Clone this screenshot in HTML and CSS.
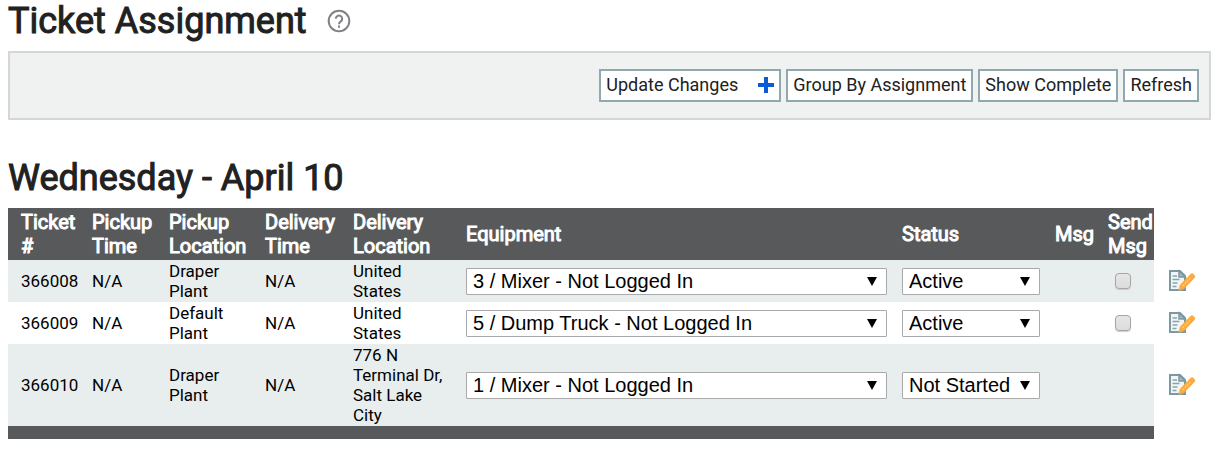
FILE: index.html
```html
<!DOCTYPE html>
<html lang="en">
<head>
<meta charset="utf-8">
<title>Ticket Assignment</title>
<link rel="stylesheet" href="styles.css">
</head>
<body>
<svg class="defs" width="0" height="0" aria-hidden="true">
    <symbol id="edit" viewBox="0 0 28 24">
        <path d="M2 2h10l5 5v14H2z" fill="#f1f5f6" stroke="#7c98a0" stroke-width="2"/>
        <path d="M11 2v6h6z" fill="#a9bcc1" stroke="#7c98a0" stroke-width="1.5"/>
        <path d="M4.500 7h4.500M4.500 10.500h7M4.500 14h5M4.500 17.500h4" stroke="#8ba4ab" stroke-width="1.600"/>
        <path d="M10.500 21.800l1.300-5.800L22.800 4.800q1.200-1.200 2.400 0l1.600 1.600q1 1.200 0 2.300L16 19.900z" fill="#fdab3d"/>
        <path d="M14.500 17l8-8" stroke="#ffd08c" stroke-width="1.200" stroke-dasharray="2 1"/>
    </symbol>
</svg>

<div class="title">
    <h1>Ticket Assignment</h1>
    <a class="help" href="#" aria-label="Help">
        <svg width="24" height="24" viewBox="0 0 24 24" fill="none" stroke="#808285" stroke-width="2">
            <circle cx="12" cy="12" r="10.300"/>
            <path d="M8.800 9.800a3.200 3.200 0 1 1 5 2.600c-1.200.9-1.800 1.400-1.800 2.800"/>
            <path d="M12 16.600v2.200"/>
        </svg>
    </a>
</div>

<div class="toolbar">
    <button type="button" class="update">Update Changes
        <svg width="16" height="16" viewBox="0 0 16 16"><path d="M8 0v16M0 8h16" stroke="#0b5bd3" stroke-width="4"/></svg>
    </button>
    <button type="button">Group By Assignment</button>
    <button type="button">Show Complete</button>
    <button type="button">Refresh</button>
</div>

<h2>Wednesday - April 10</h2>

<table class="tickets">
    <colgroup>
        <col class="c-ticket">
        <col class="c-ptime">
        <col class="c-ploc">
        <col class="c-dtime">
        <col class="c-dloc">
        <col class="c-equip">
        <col class="c-status">
        <col class="c-msg">
        <col class="c-send">
        <col class="c-edit">
    </colgroup>
    <thead>
        <tr>
            <th>Ticket #</th>
            <th>Pickup Time</th>
            <th>Pickup Location</th>
            <th>Delivery Time</th>
            <th>Delivery Location</th>
            <th>Equipment</th>
            <th>Status</th>
            <th class="tight">Msg</th>
            <th class="tight">Send Msg</th>
            <td class="edit"></td>
        </tr>
    </thead>
    <tbody>
        <tr>
            <td>366008</td>
            <td>N/A</td>
            <td>Draper Plant</td>
            <td>N/A</td>
            <td>United States</td>
            <td><select aria-label="Equipment for 366008"><option>3 / Mixer - Not Logged In</option></select></td>
            <td><select aria-label="Status of 366008"><option>Active</option></select></td>
            <td class="tight"></td>
            <td class="tight send"><input type="checkbox" aria-label="Send message for 366008"></td>
            <td class="edit"><a href="#" aria-label="Edit 366008"><svg width="28" height="24"><use href="#edit"/></svg></a></td>
        </tr>
        <tr>
            <td>366009</td>
            <td>N/A</td>
            <td>Default Plant</td>
            <td>N/A</td>
            <td>United States</td>
            <td><select aria-label="Equipment for 366009"><option>5 / Dump Truck - Not Logged In</option></select></td>
            <td><select aria-label="Status of 366009"><option>Active</option></select></td>
            <td class="tight"></td>
            <td class="tight send"><input type="checkbox" aria-label="Send message for 366009"></td>
            <td class="edit"><a href="#" aria-label="Edit 366009"><svg width="28" height="24"><use href="#edit"/></svg></a></td>
        </tr>
        <tr>
            <td>366010</td>
            <td>N/A</td>
            <td>Draper Plant</td>
            <td>N/A</td>
            <td>776 N Terminal Dr, Salt Lake City</td>
            <td><select aria-label="Equipment for 366010"><option>1 / Mixer - Not Logged In</option></select></td>
            <td><select aria-label="Status of 366010"><option>Not Started</option></select></td>
            <td class="tight"></td>
            <td class="tight send"></td>
            <td class="edit"><a href="#" aria-label="Edit 366010"><svg width="28" height="24"><use href="#edit"/></svg></a></td>
        </tr>
    </tbody>
    <tfoot>
        <tr>
            <td colspan="9"></td>
            <td class="edit"></td>
        </tr>
    </tfoot>
</table>
</body>
</html>
```
FILE: styles.css
```css
*{box-sizing:border-box;}
body{margin:0 9px 0 8px;background:#fff;color:#000;font:17px/20px Roboto,sans-serif;}
h1,h2{margin:0;color:#212121;font-size:36px;line-height:42px;font-weight:400;-webkit-text-stroke:1px #212121;}
h2{margin-top:37px;}
.defs{display:block;}

.title{display:flex;align-items:center;gap:20px;height:51px;padding-bottom:9px;}
.help{display:flex;}

/* toolbar */
.toolbar{display:flex;flex-wrap:wrap;justify-content:flex-end;gap:5px;padding:16px 10px;border:2px solid #d5d6d6;background:#f0f2f1;}
.toolbar button{height:33px;padding:0 5px 2px;border:2px solid #8fa9ae;border-radius:0;background:#fff;color:#212121;font:18px/27px Roboto,sans-serif;cursor:pointer;}
.toolbar .update{display:flex;align-items:center;gap:20px;}

/* tickets */
.tickets{width:100%;margin-top:9px;border-collapse:collapse;table-layout:fixed;}
.tickets th,.tickets td{padding:1px 15px 1px 0;text-align:left;vertical-align:middle;}
.tickets th{padding-top:2px;padding-bottom:2px;background:#58595b;color:#fff;font-size:20px;line-height:24px;font-weight:400;-webkit-text-stroke:1px #fff;}
.tickets th:first-child,.tickets td:first-child{padding-left:13px;}
.tickets tbody td:nth-child(5){padding-right:20px;}
.tickets tbody tr:nth-child(odd) td{background:#e8eeee;}
.tickets .tight{padding-right:0;}
.tickets tfoot td{height:13px;padding:0;background:#58595b;}
.tickets tr .edit,.tickets tbody tr:nth-child(odd) .edit{padding:0 0 0 14px;background:none;}
.edit a,.edit svg{display:block;}

.c-ticket{width:84px;}
.c-ptime{width:77px;}
.c-ploc{width:96px;}
.c-dtime{width:88px;}
.c-dloc{width:113px;}
.c-status{width:153px;}
.c-msg{width:53px;}
.c-send{width:46px;}
.c-edit{width:57px;}

select{display:block;width:100%;height:27px;padding:0 6px;border:1px solid #a9a9a9;border-radius:1px;-webkit-appearance:none;appearance:none;color:#000;font:20px/25px "Liberation Sans",Arial,sans-serif;background:#fff url("data:image/svg+xml,%3Csvg xmlns='http://www.w3.org/2000/svg' width='10' height='9'%3E%3Cpath d='M0 0h10L5 9z'/%3E%3C/svg%3E") no-repeat right 9px center;}
input[type=checkbox]{display:block;width:16px;height:16px;margin:0 0 0 7px;border:1px solid #a6a6a6;border-radius:4px;-webkit-appearance:none;appearance:none;background:linear-gradient(#e6e6e6,#dcdcdc);box-shadow:0 1px 1px #ccc;}
```
